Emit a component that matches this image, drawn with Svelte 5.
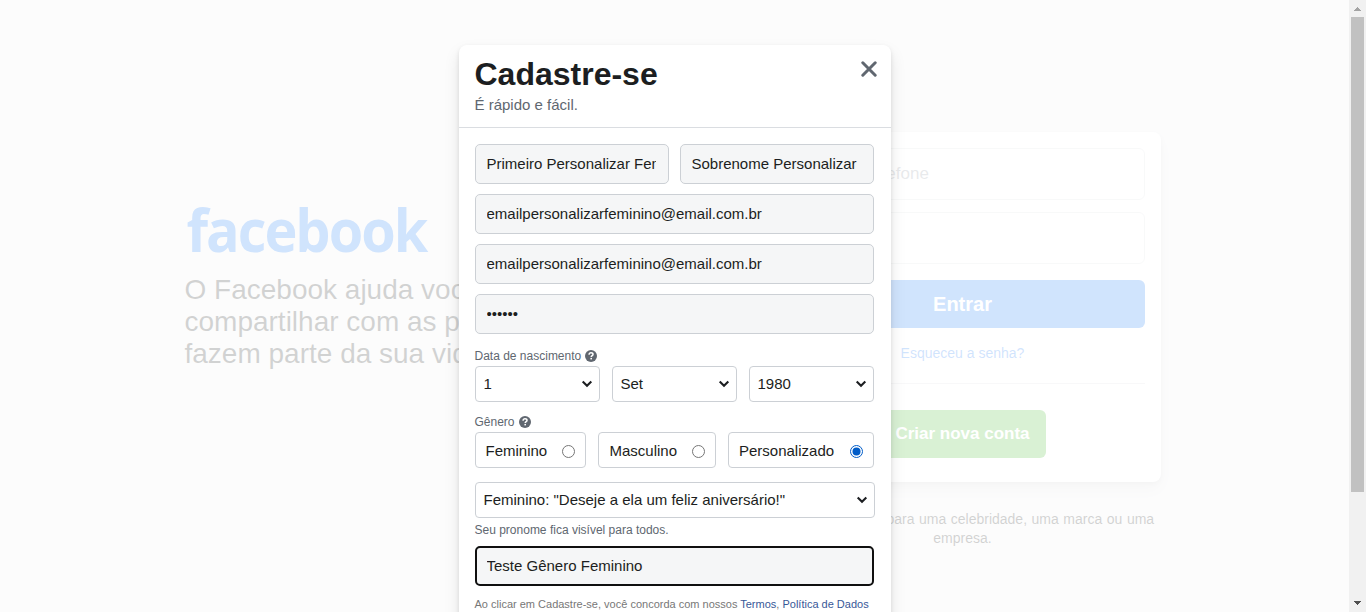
<script>
  const dates = ['1', 'Set', '1980'];
  const genders = [
    { label: 'Feminino', width: 111, inset: 10, checked: false },
    { label: 'Masculino', width: 118, inset: 11, checked: false },
    { label: 'Personalizado', width: 146, inset: 10.5, checked: true }
  ];
  const email = 'emailpersonalizarfeminino@email.com.br';
</script>

{#snippet chevron()}
  <svg class="chevron" width="12" height="8" viewBox="0 0 12 8"><path d="M1.7 1.6 6 5.8l4.3-4.2" fill="none" stroke="#1c1e21" stroke-width="2.1" /></svg>
{/snippet}

{#snippet help()}
  <svg class="help" width="12" height="12" viewBox="0 0 12 12">
    <circle cx="6" cy="6" r="6" fill="#606770" />
    <path d="M4.1 4.7C4.1 3.4 4.9 2.8 6 2.8s2 .6 2 1.6c0 1.3-1.8 1.3-1.8 2.7" fill="none" stroke="#fff" stroke-width="1.5" />
    <rect x="5.4" y="7.9" width="1.6" height="1.5" fill="#fff" />
  </svg>
{/snippet}

<div class="screen">
  <div class="page">
    <div class="columns">
      <section class="intro">
        <svg class="logo" width="250" height="60" viewBox="0 0 250 60">
          <text transform="translate(1.5 52) scale(.93 1)" textLength="260" lengthAdjust="spacing">facebook</text>
        </svg>
        <h2>O Facebook ajuda você a se conectar e compartilhar com as pessoas que fazem parte da sua vida.</h2>
      </section>
      <section class="login">
        <div class="card">
          <div class="login-input">Email ou telefone</div>
          <div class="login-input"></div>
          <div class="enter">Entrar</div>
          <div class="forgot">Esqueceu a senha?</div>
          <div class="rule"></div>
          <div class="create">Criar nova conta</div>
        </div>
        <p><b>Crie uma Página</b> para uma celebridade, uma marca ou uma empresa.</p>
      </section>
    </div>
  </div>
  <div class="scrollbar">
    <svg width="17" height="17" viewBox="0 0 17 17" shape-rendering="crispEdges"><path d="M8 7h1v1h1v1h1v1h1v1H5v-1h1V9h1V8h1z" fill="#a3a3a3" /></svg>
    <div class="thumb"></div>
    <svg width="17" height="17" viewBox="0 0 17 17" shape-rendering="crispEdges"><path d="M5 6h7v1h-1v1h-1v1H9v1H8V9H7V8H6V7H5z" fill="#505050" /></svg>
  </div>
  <div class="overlay">
    <div class="modal">
      <header>
        <div>
          <h1>Cadastre-se</h1>
          <div class="sub">É rápido e fácil.</div>
        </div>
        <svg class="close" width="16" height="16" viewBox="0 0 16 16"><path d="M1.8 1.8l12.4 12.4M14.2 1.8L1.8 14.2" stroke="#606770" stroke-width="3" stroke-linecap="round" /></svg>
      </header>
      <div class="form">
        <div class="names">
          <div class="field"><span>Primeiro Personalizar Feminino</span></div>
          <div class="field"><span>Sobrenome Personalizar Feminino</span></div>
        </div>
        <div class="field"><span>{email}</span></div>
        <div class="field"><span>{email}</span></div>
        <div class="field"><span>••••••</span></div>
        <div class="label birth">Data de nascimento {@render help()}</div>
        <div class="selects">
          {#each dates as date}
            <div class="select"><span>{date}</span>{@render chevron()}</div>
          {/each}
        </div>
        <div class="label gender">Gênero {@render help()}</div>
        <div class="options">
          {#each genders as g}
            <div class="option" style="width: {g.width}px; padding-left: {g.inset}px">
              <span>{g.label}</span>
              <svg width="13" height="13" viewBox="0 0 13 13">
                <circle cx="6.5" cy="6.5" r="6" fill="#fff" stroke={g.checked ? '#005cc8' : '#767676'} />
                {#if g.checked}<circle cx="6.5" cy="6.5" r="4" fill="#005cc8" />{/if}
              </svg>
            </div>
          {/each}
        </div>
        <div class="select pronoun"><span>Feminino: "Deseje a ela um feliz aniversário!"</span>{@render chevron()}</div>
        <div class="label note">Seu pronome fica visível para todos.</div>
        <div class="field focused"><span>Teste Gênero Feminino</span></div>
        <div class="terms">Ao clicar em Cadastre-se, você concorda com nossos <a href="#termos">Termos</a>, <a href="#dados">Política de Dados</a></div>
      </div>
    </div>
  </div>
</div>

<style>
  :global(body) { overflow: hidden; }
  .screen, .screen * { box-sizing: border-box; }
  .screen {
    position: relative;
    display: flex;
    width: 1366px;
    height: 612px;
    overflow: hidden;
    font-family: "Liberation Sans", Arial, sans-serif;
    color: #1c1e21;
  }
  svg { display: block; flex: none; }
  h1, h2, p { margin: 0; }
  .page { width: 1349px; background: #f0f0f1; }
  .columns {
    display: flex;
    justify-content: space-between;
    width: 980px;
    margin: 0 auto;
    padding: 132px 4px 0 0;
  }
  .intro { width: 500px; padding-top: 68px; }
  .logo text {
    font: 700 60px "Open Sans", "Noto Sans", sans-serif;
    fill: #1877f2;
  }
  h2 { margin-top: 14px; font-size: 28px; font-weight: 400; line-height: 32px; }
  .login { width: 396px; font-size: 14px; text-align: center; }
  .card {
    height: 350px;
    padding: 16px;
    border-radius: 8px;
    background: #fff;
    box-shadow: 0 2px 4px rgba(0, 0, 0, .1), 0 8px 16px rgba(0, 0, 0, .1);
  }
  .login-input {
    height: 52px;
    margin-bottom: 12px;
    padding: 0 16px;
    border: 1px solid #dddfe2;
    border-radius: 6px;
    color: #8d949e;
    font-size: 17px;
    line-height: 49px;
    text-align: left;
  }
  .enter {
    height: 48px;
    margin-top: 16px;
    border-radius: 6px;
    background: #1877f2;
    color: #fff;
    font-size: 20px;
    font-weight: 700;
    line-height: 48px;
  }
  .forgot { margin-top: 16px; color: #1877f2; line-height: 19px; }
  .rule { height: 1px; margin-top: 20px; background: #dadde1; }
  .create {
    width: 166px;
    height: 48px;
    margin: 26px auto 0;
    border-radius: 6px;
    background: #42b72a;
    color: #fff;
    font-size: 17px;
    font-weight: 700;
    line-height: 47px;
    white-space: nowrap;
  }
  .login p { width: 402px; margin: 28px -3px 0; line-height: 19px; word-spacing: .65px; }
  .scrollbar {
    display: flex;
    flex-direction: column;
    width: 17px;
    background: #f1f1f1;
  }
  .thumb { width: 13px; height: 475px; margin: 0 2px; background: #c1c1c1; }
  .scrollbar svg:last-child { margin-top: auto; }
  .overlay {
    position: absolute;
    inset: 0 17px 0 0;
    padding: 45px 0 0 458.5px;
    background: rgba(255, 255, 255, .8);
  }
  .modal {
    width: 432px;
    height: 700px;
    border-radius: 8px;
    background: #fff;
    box-shadow: 0 2px 4px rgba(0, 0, 0, .1), 0 8px 16px rgba(0, 0, 0, .1);
  }
  header {
    display: flex;
    justify-content: space-between;
    height: 83px;
    padding: 10px 14px 0 16px;
    border-bottom: 1px solid #dadde1;
  }
  h1 { font-size: 32px; line-height: 38px; }
  .sub { color: #606770; font-size: 15px; line-height: 24px; }
  .close { margin-top: 6px; }
  .form { padding: 16px 16px 0; }
  .field {
    display: flex;
    width: 399px;
    height: 40px;
    margin-bottom: 10px;
    padding: 0 12px 0 11px;
    border: 1px solid #ccd0d5;
    border-radius: 5px;
    background: #f5f6f7;
    font-size: 15px;
    line-height: 37px;
  }
  .field span { flex: 1; overflow: hidden; white-space: nowrap; }
  .names { display: flex; gap: 11px; }
  .names .field { width: 194px; }
  .label { display: flex; align-items: center; gap: 4px; color: #606770; font-size: 12px; line-height: 20px; }
  .birth { margin-top: 12px; }
  .gender { margin-top: 10px; }
  .selects, .options { display: flex; gap: 12px; }
  .select, .option {
    display: flex;
    align-items: center;
    justify-content: space-between;
    height: 36px;
    border: 1px solid #ccd0d5;
    border-radius: 4px;
    background: #fff;
    font-size: 15px;
    white-space: nowrap;
  }
  .select span, .option span { padding-bottom: 2px; }
  .select { width: 125px; padding: 0 6px 0 8px; }
  .option { padding: 2px 10px 0; }
  .pronoun { width: 400px; margin-top: 14px; }
  .note { margin-top: 2px; }
  .focused {
    margin-top: 6px;
    padding: 0 10px;
    border: 2px solid #101010;
    line-height: 35px;
  }
  .terms { padding-top: 1px; color: #777; font-size: 11px; line-height: 15px; white-space: nowrap; }
  .terms a { color: #385898; text-decoration: none; }
</style>
